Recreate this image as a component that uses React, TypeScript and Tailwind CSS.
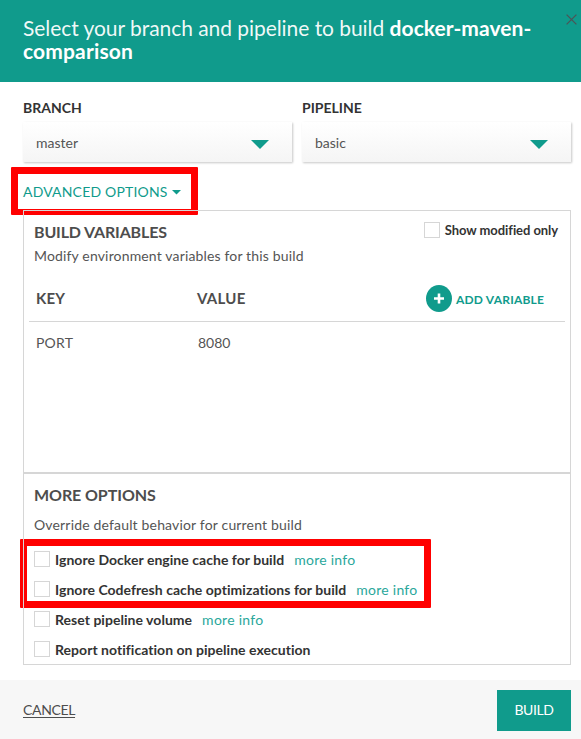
import React from "react";

function Select({ label, value }: { label: string; value: string }) {
  return (
    <div className="flex w-[269px] flex-col">
      <div className="h-6 text-sm leading-[22px] font-bold text-[#333]">{label}</div>
      <div className="mt-px flex h-10 items-center justify-between bg-gradient-to-b from-white to-[#f5f5f5] pr-[23px] pl-[13px] shadow-[1px_1px_2px_rgba(0,0,0,0.22)]">
        <span className="pt-px text-sm text-[#555]">{value}</span>
        <svg width="18" height="9" viewBox="0 0 18 9" className="mt-1">
          <path d="M0 0h18L9 9z" fill="#109b8c" />
        </svg>
      </div>
    </div>
  );
}

function Box() {
  return <span className="block size-4 shrink-0 border border-[#d6d6d6] bg-white" />;
}

function Option({ label, info }: { label: string; info?: boolean }) {
  return (
    <div className="flex h-[30px] items-start">
      <Box />
      <span className="ml-[5px] text-sm leading-[18px] font-bold tracking-[0.035px] text-[#333]">{label}</span>
      {info && <a className="ml-[10px] text-sm leading-[18px] tracking-[0.26px] text-[#2aa79b]">more info</a>}
    </div>
  );
}

export default function App() {
  return (
    <div className="relative flex h-[739px] w-[581px] flex-col overflow-hidden bg-white font-['Lato',sans-serif] text-[#555]">
      <header className="h-[82px] bg-[#109b8c] pt-4 pl-[23px] text-[21px] leading-[23px] text-white">
        <span className="tracking-[-0.05px] text-white/95">Select your branch and pipeline to build </span>
        <b className="font-bold tracking-[0.05px]">docker-maven-</b>
        <br />
        <b className="font-bold tracking-[0.15px]">comparison</b>
        <svg className="absolute top-[14px] left-[566px]" width="11" height="11" viewBox="0 0 11 11">
          <path d="M.6.6l9.8 9.8M10.4.6L.6 10.4" stroke="#4b5557" strokeWidth="1.3" />
        </svg>
      </header>

      <div className="flex gap-[10px] pt-[15px] pl-[23px]">
        <Select label="BRANCH" value="master" />
        <Select label="PIPELINE" value="basic" />
      </div>

      <div className="flex h-12 items-center pt-3 pl-[23px] text-sm text-[#109b8c]">
        <span className="tracking-[0.18px]">ADVANCED OPTIONS</span>
        <svg width="9" height="5" viewBox="0 0 9 5" className="ml-1">
          <path d="M0 0h9L4.5 4.5z" fill="#109b8c" />
        </svg>
      </div>

      <div className="absolute top-[167px] left-[11px] h-[48px] w-[187px] rounded-[1px] border-[7px] border-b-[6px] border-[#f00]" />
      <div className="absolute top-[539px] left-5 h-[69px] w-[411px] rounded-[1px] border-[7px] border-[#f00]" />

      <section className="relative ml-[23px] flex h-[263px] w-[548px] flex-col border border-[#d6d6d6]">
        <div className="flex h-[68px] justify-between pt-[11px] pr-3 pl-[10px]">
          <div>
            <h2 className="text-base leading-5 font-bold tracking-[-0.16px] text-[#4d4d4d]">BUILD VARIABLES</h2>
            <p className="mt-[5px] text-sm leading-[18px] tracking-[0.155px]">Modify environment variables for this build</p>
          </div>
          <div className="flex items-start gap-[5px]">
            <Box />
            <span className="text-[13px] leading-4 font-bold tracking-[-0.07px] text-[#333]">Show modified only</span>
          </div>
        </div>
        <div className="mx-[5px] flex h-[43px] items-center border-b border-[#d6d6d6] pb-[3px] pl-[7px]">
          <span className="w-[161px] text-[15px] font-bold tracking-[0.2px] text-[#4d4d4d]">KEY</span>
          <span className="w-[229px] text-[15px] font-bold tracking-[0.3px] text-[#4d4d4d]">VALUE</span>
          <svg width="26" height="27" viewBox="0 0 26 27" className="shrink-0">
            <ellipse cx="13" cy="13.5" rx="13" ry="13.5" fill="#109b8c" />
            <path d="M13 8.5v10M8 13.5h10" stroke="#fff" strokeWidth="2.6" />
          </svg>
          <span className="mt-[2px] ml-1 text-xs font-bold tracking-[0.2px] text-[#109b8c]">ADD VARIABLE</span>
        </div>
        <div className="flex h-[42px] items-center pl-3 text-sm">
          <span className="w-[162px] tracking-[0.2px]">PORT</span>
          <span>8080</span>
        </div>
      </section>

      <section className="relative ml-[23px] h-[192px] w-[548px] border border-[#d6d6d6] pl-[10px]">
        <h2 className="mt-[11px] text-base leading-5 font-bold tracking-[-0.08px] text-[#4d4d4d]">MORE OPTIONS</h2>
        <p className="mt-[11px] mb-[17px] h-[18px] text-sm leading-[18px] tracking-[0.17px]">Override default behavior for current build</p>
        <Option label="Ignore Docker engine cache for build" info />
        <Option label="Ignore Codefresh cache optimizations for build" info />
        <Option label="Reset pipeline volume" info />
        <Option label="Report notification on pipeline execution" />
      </section>

      <footer className="mt-[15px] flex flex-1 items-start justify-between bg-[#f7f7f7] pt-[10px] pr-[10px] pl-[23px] text-sm">
        <a className="mt-[11px] leading-[18px] tracking-[-0.35px] text-[#4d4d4d] underline underline-offset-2">CANCEL</a>
        <button className="h-[41px] w-[74px] bg-[#109b8c] pb-px tracking-[-0.4px] text-white">BUILD</button>
      </footer>
    </div>
  );
}
